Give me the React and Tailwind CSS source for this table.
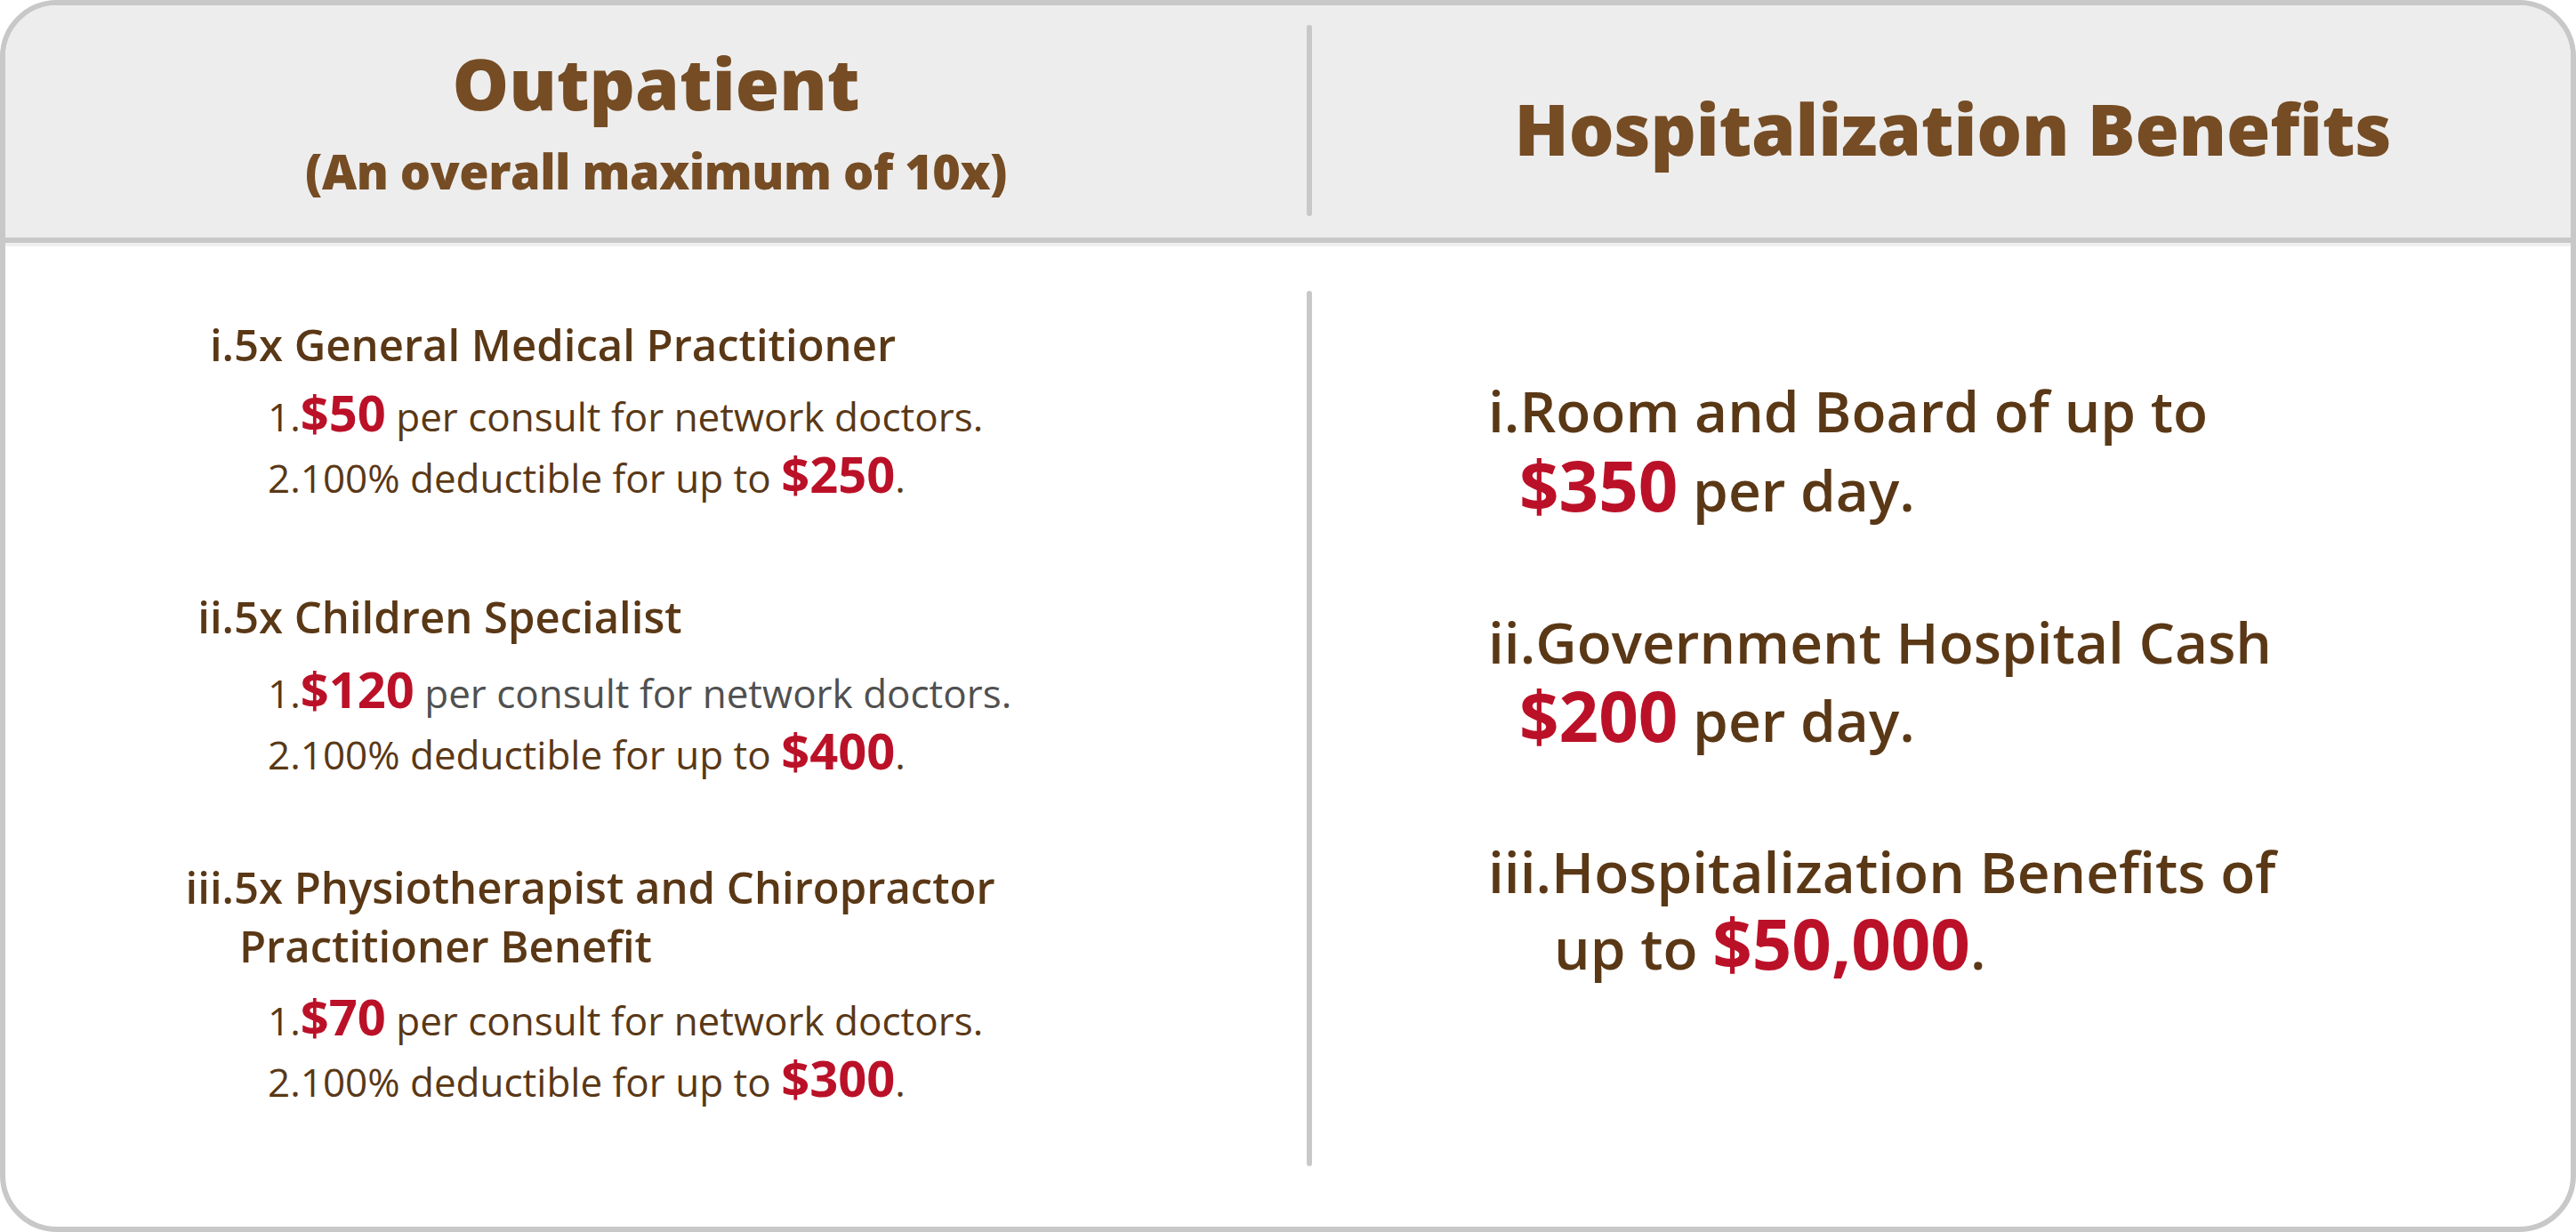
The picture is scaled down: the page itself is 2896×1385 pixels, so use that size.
import React from "react";

const Red = ({ children, size = "text-[56px]" }) => (
  <span className={`${size} font-bold text-[#bb1128]`}>{children}</span>
);

export default function App() {
  return (
    <div className="w-[2896px] h-[1385px] bg-white font-['Open_Sans',sans-serif]">
      <div className="h-full border-[6px] border-[#c8c8c8] rounded-[64px] overflow-hidden flex flex-col">
        {/* header */}
        <div className="h-[261px] bg-[#ededed] flex border-b-[6px] border-[#c8c8c8] box-content">
          <div className="w-[1463px] pt-[42px] text-center text-[#754c24] font-extrabold">
            <div className="text-[80px] leading-[90px]">Outpatient</div>
            <div className="mt-[19px] text-[54px] leading-[70px] tracking-[-0.5px]">(An overall maximum of 10x)</div>
          </div>
          <div className="w-[6px] mt-[22px] mb-[24px] rounded-full bg-[#c8c8c8]" />
          <div className="flex-1 pt-[93px] pl-[26px] text-center text-[#754c24] font-extrabold">
            <div className="text-[80px] leading-[90px] tracking-[-0.25px]">Hospitalization Benefits</div>
          </div>
        </div>
        <div className="h-[4px] bg-[#efefef]" />

        {/* body */}
        <div className="flex-1 flex text-[#5a3816]">
          {/* outpatient list */}
          <div className="w-[1463px] pt-[80px]">
            <div className="flex text-[49px] leading-[60px] font-semibold">
              <span className="w-[257px] text-right shrink-0">i.</span>
              <span>5x General Medical Practitioner</span>
            </div>
            <div className="pl-[295px] text-[44px] leading-[64px]">
              <div className="mt-[14px]">1.<Red>$50</Red> per consult for network doctors.</div>
              <div>2.100% deductible for up to <Red>$250</Red>.</div>
            </div>

            <div className="mt-[94px] flex text-[49px] leading-[60px] font-semibold">
              <span className="w-[257px] text-right shrink-0">ii.</span>
              <span>5x Children Specialist</span>
            </div>
            <div className="pl-[295px] text-[44px] leading-[64px]">
              <div className="mt-[19px]">1.<Red>$120</Red> <span className="text-[#505050]">per consult for network doctors.</span></div>
              <div>2.100% deductible for up to <Red>$400</Red>.</div>
            </div>

            <div className="mt-[87px] flex text-[49px] leading-[60px] font-semibold">
              <span className="w-[257px] text-right shrink-0">iii.</span>
              <div>
                <div>5x Physiotherapist and Chiropractor</div>
                <div className="mt-[6px] pl-[6px]">Practitioner Benefit</div>
              </div>
            </div>
            <div className="pl-[295px] text-[44px] leading-[64px]">
              <div className="mt-[17px]">1.<Red>$70</Red> per consult for network doctors.</div>
              <div>2.100% deductible for up to <Red>$300</Red>.</div>
            </div>
          </div>

          <div className="w-[6px] mt-[50px] mb-[68px] rounded-full bg-[#c8c8c8]" />

          {/* hospitalization list */}
          <div className="flex-1 pt-[145px] pl-[198px] text-[64px] leading-[80px] font-semibold">
            <div>i.Room and Board of up to</div>
            <div className="mt-[3px] pl-[35px]"><Red size="text-[78px]">$350</Red> per day.</div>

            <div className="mt-[91px]">ii.Government Hospital Cash</div>
            <div className="mt-[2px] pl-[35px]"><Red size="text-[78px]">$200</Red> per day.</div>

            <div className="mt-[90px]">iii.Hospitalization Benefits of</div>
            <div className="mt-[0px] pl-[74px]">up to <Red size="text-[78px]">$50,000</Red>.</div>
          </div>
        </div>
      </div>
    </div>
  );
}
